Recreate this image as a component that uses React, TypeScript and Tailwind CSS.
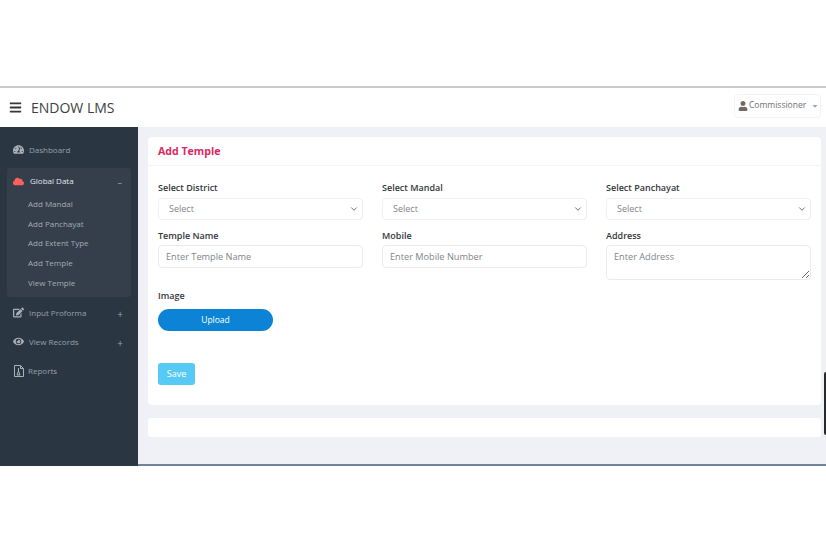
import { FaBars, FaCloud, FaTachometerAlt, FaEdit, FaEye, FaUser, FaCaretDown } from "react-icons/fa";
import { ChevronDown } from "lucide-react";

function ReportIcon() {
  return (
    <svg width="10" height="12" viewBox="0 0 10 12" fill="none" stroke="#aab0b7" strokeWidth="1">
      <path d="M.5.5h6l3 3v8h-9z" />
      <path d="M6.5.5v3h3" />
      <path d="M4.5 3v3M3 10h3L4.5 6z" />
    </svg>
  );
}

function SubItem({ label }: { label: string }) {
  return <div className="h-[19.8px] pl-[21px] flex items-center text-[8px] text-[#a4abb3]">{label}</div>;
}

function NavItem({ icon, label, plus, gap, className }: { icon: React.ReactNode; label: string; plus?: boolean; gap: string; className: string }) {
  return (
    <div className={`flex items-center text-[8px] text-[#97a0aa] ${className}`}>
      <span className={`flex w-[11px] justify-center text-[#aab0b7] ${gap}`}>{icon}</span>
      <span>{label}</span>
      {plus && <span className="ml-auto mr-[15px] mt-[3px] text-[10px] leading-none text-[#9aa3ad]">+</span>}
    </div>
  );
}

function Label({ children, className = "" }: { children: React.ReactNode; className?: string }) {
  return <label className={`block text-[9px] leading-[12px] font-semibold text-[#34373b] ${className}`}>{children}</label>;
}

function SelectBox() {
  return (
    <div className="h-[22px] rounded-[4px] border border-[#eef0f3] bg-white pl-[10px] pr-[3px] flex items-center justify-between text-[9px] text-[#80858a]">
      <span>Select</span>
      <ChevronDown size={10} strokeWidth={2} color="#555" />
    </div>
  );
}

function TextInput({ placeholder }: { placeholder: string }) {
  return (
    <input
      placeholder={placeholder}
      className="block h-[23px] w-full rounded-[4px] border border-[#e9ebef] bg-white px-[7px] text-[9.2px] text-[#80858a] placeholder:text-[#80858a] outline-none"
    />
  );
}

export default function App() {
  return (
    <div className="relative h-[551px] w-[826px] overflow-hidden bg-white font-['Open_Sans',sans-serif]">
      <div className="h-[86px]" />
      <div className="h-[2px] bg-[#c9cbce]" />
      <header className="flex h-[39px] items-center justify-between bg-white pl-[10px] pr-[5px]">
        <div className="flex items-center">
          <FaBars className="-ml-[1px] text-[#34373a] w-[13px] h-[13px]" />
          <span className="ml-[9px] text-[14px] text-[#3d3f42]">ENDOW LMS</span>
        </div>
        <div className="mb-[4px] flex h-[24px] w-[87px] items-center rounded-[4px] border border-[#f2f3f5] pl-[3px] text-[8.5px] text-[#6c7075]">
          <FaUser className="h-[10px] w-[10px] text-[#6e6a66]" />
          <span className="ml-[1px]">Commissioner</span>
          <FaCaretDown className="ml-[5px] h-[8px] w-[8px] text-[#a5a8ac]" />
        </div>
      </header>
      <div className="flex h-[337px]">
        <aside className="w-[138px] bg-[#2b3643] pt-[13px]">
          <NavItem icon={<FaTachometerAlt className="h-[11px] w-[11px]" />} label="Dashboard" gap="mr-[5px]" className="h-[19px] pl-[13px]" />
          <div className="mx-[7px] mt-[9px] h-[129px] rounded-[3px] bg-[#353f4c]">
            <div className="flex h-[26px] items-center pl-[6px] text-[8px] text-[#e4e6e9]">
              <FaCloud className="mr-[6px] h-[11px] w-[11px] text-[#f9615b]" />
              <span>Global Data</span>
              <span className="ml-auto mr-[9px] mt-[3px] text-[9px] leading-none text-[#9aa3ad]">–</span>
            </div>
            <SubItem label="Add Mandal" />
            <SubItem label="Add Panchayat" />
            <SubItem label="Add Extent Type" />
            <SubItem label="Add Temple" />
            <SubItem label="View Temple" />
          </div>
          <NavItem icon={<FaEdit className="h-[11px] w-[11px]" />} label="Input Proforma" plus gap="mr-[5px]" className="mt-[6px] h-[19px] pl-[13px]" />
          <NavItem icon={<FaEye className="h-[11px] w-[11px]" />} label="View Records" plus gap="mr-[5px]" className="mt-[10px] h-[19px] pl-[13px]" />
          <NavItem icon={<ReportIcon />} label="Reports" gap="mr-[4px]" className="mt-[10px] h-[19px] pl-[13px]" />
        </aside>
        <main className="flex-1 bg-[#f0f1f7] pl-[10px] pr-[5px] pt-[10px]">
          <section className="h-[268px] rounded-[4px] bg-white">
            <div className="flex h-[29px] items-center border-b border-[#f3f4f7] pl-[10px] pt-[1px] text-[10.6px] font-bold text-[#d9295f]">Add Temple</div>
            <div className="px-[10px] pt-[16px]">
              <div className="grid grid-cols-3 gap-x-[19px]">
                <div>
                  <Label className="mb-[4px]">Select District</Label>
                  <SelectBox />
                </div>
                <div>
                  <Label className="mb-[4px]">Select Mandal</Label>
                  <SelectBox />
                </div>
                <div>
                  <Label className="mb-[4px]">Select Panchayat</Label>
                  <SelectBox />
                </div>
                <div className="mt-[10px]">
                  <Label className="mb-[3px]">Temple Name</Label>
                  <TextInput placeholder="Enter Temple Name" />
                </div>
                <div className="mt-[10px]">
                  <Label className="mb-[3px]">Mobile</Label>
                  <TextInput placeholder="Enter Mobile Number" />
                </div>
                <div className="mt-[10px]">
                  <Label className="mb-[3px]">Address</Label>
                  <textarea
                    placeholder="Enter Address"
                    className="block h-[35px] w-full rounded-[4px] border border-[#e9ebef] bg-white px-[7px] py-[4.5px] text-[9.2px] leading-[12px] text-[#80858a] placeholder:text-[#80858a] outline-none"
                  />
                </div>
              </div>
              <Label className="mt-[10px]">Image</Label>
              <button className="mt-[7px] block h-[22px] w-[115px] rounded-full bg-[#0d83d5] text-[8.5px] text-white">Upload</button>
              <button className="mt-[32px] block h-[22px] w-[37px] rounded-[3px] bg-[#56c9f5] text-[9px] text-white">Save</button>
            </div>
          </section>
          <section className="mt-[13px] h-[19px] rounded-[3px] bg-white" />
        </main>
      </div>
      <div className="flex h-[2px]">
        <div className="w-[138px] bg-[#2b3643]" />
        <div className="flex-1 bg-[#6f8298]" />
      </div>
      <div className="absolute right-0 top-[372px] h-[63px] w-[2px] rounded-l-[2px] bg-[#26292e]" />
    </div>
  );
}
